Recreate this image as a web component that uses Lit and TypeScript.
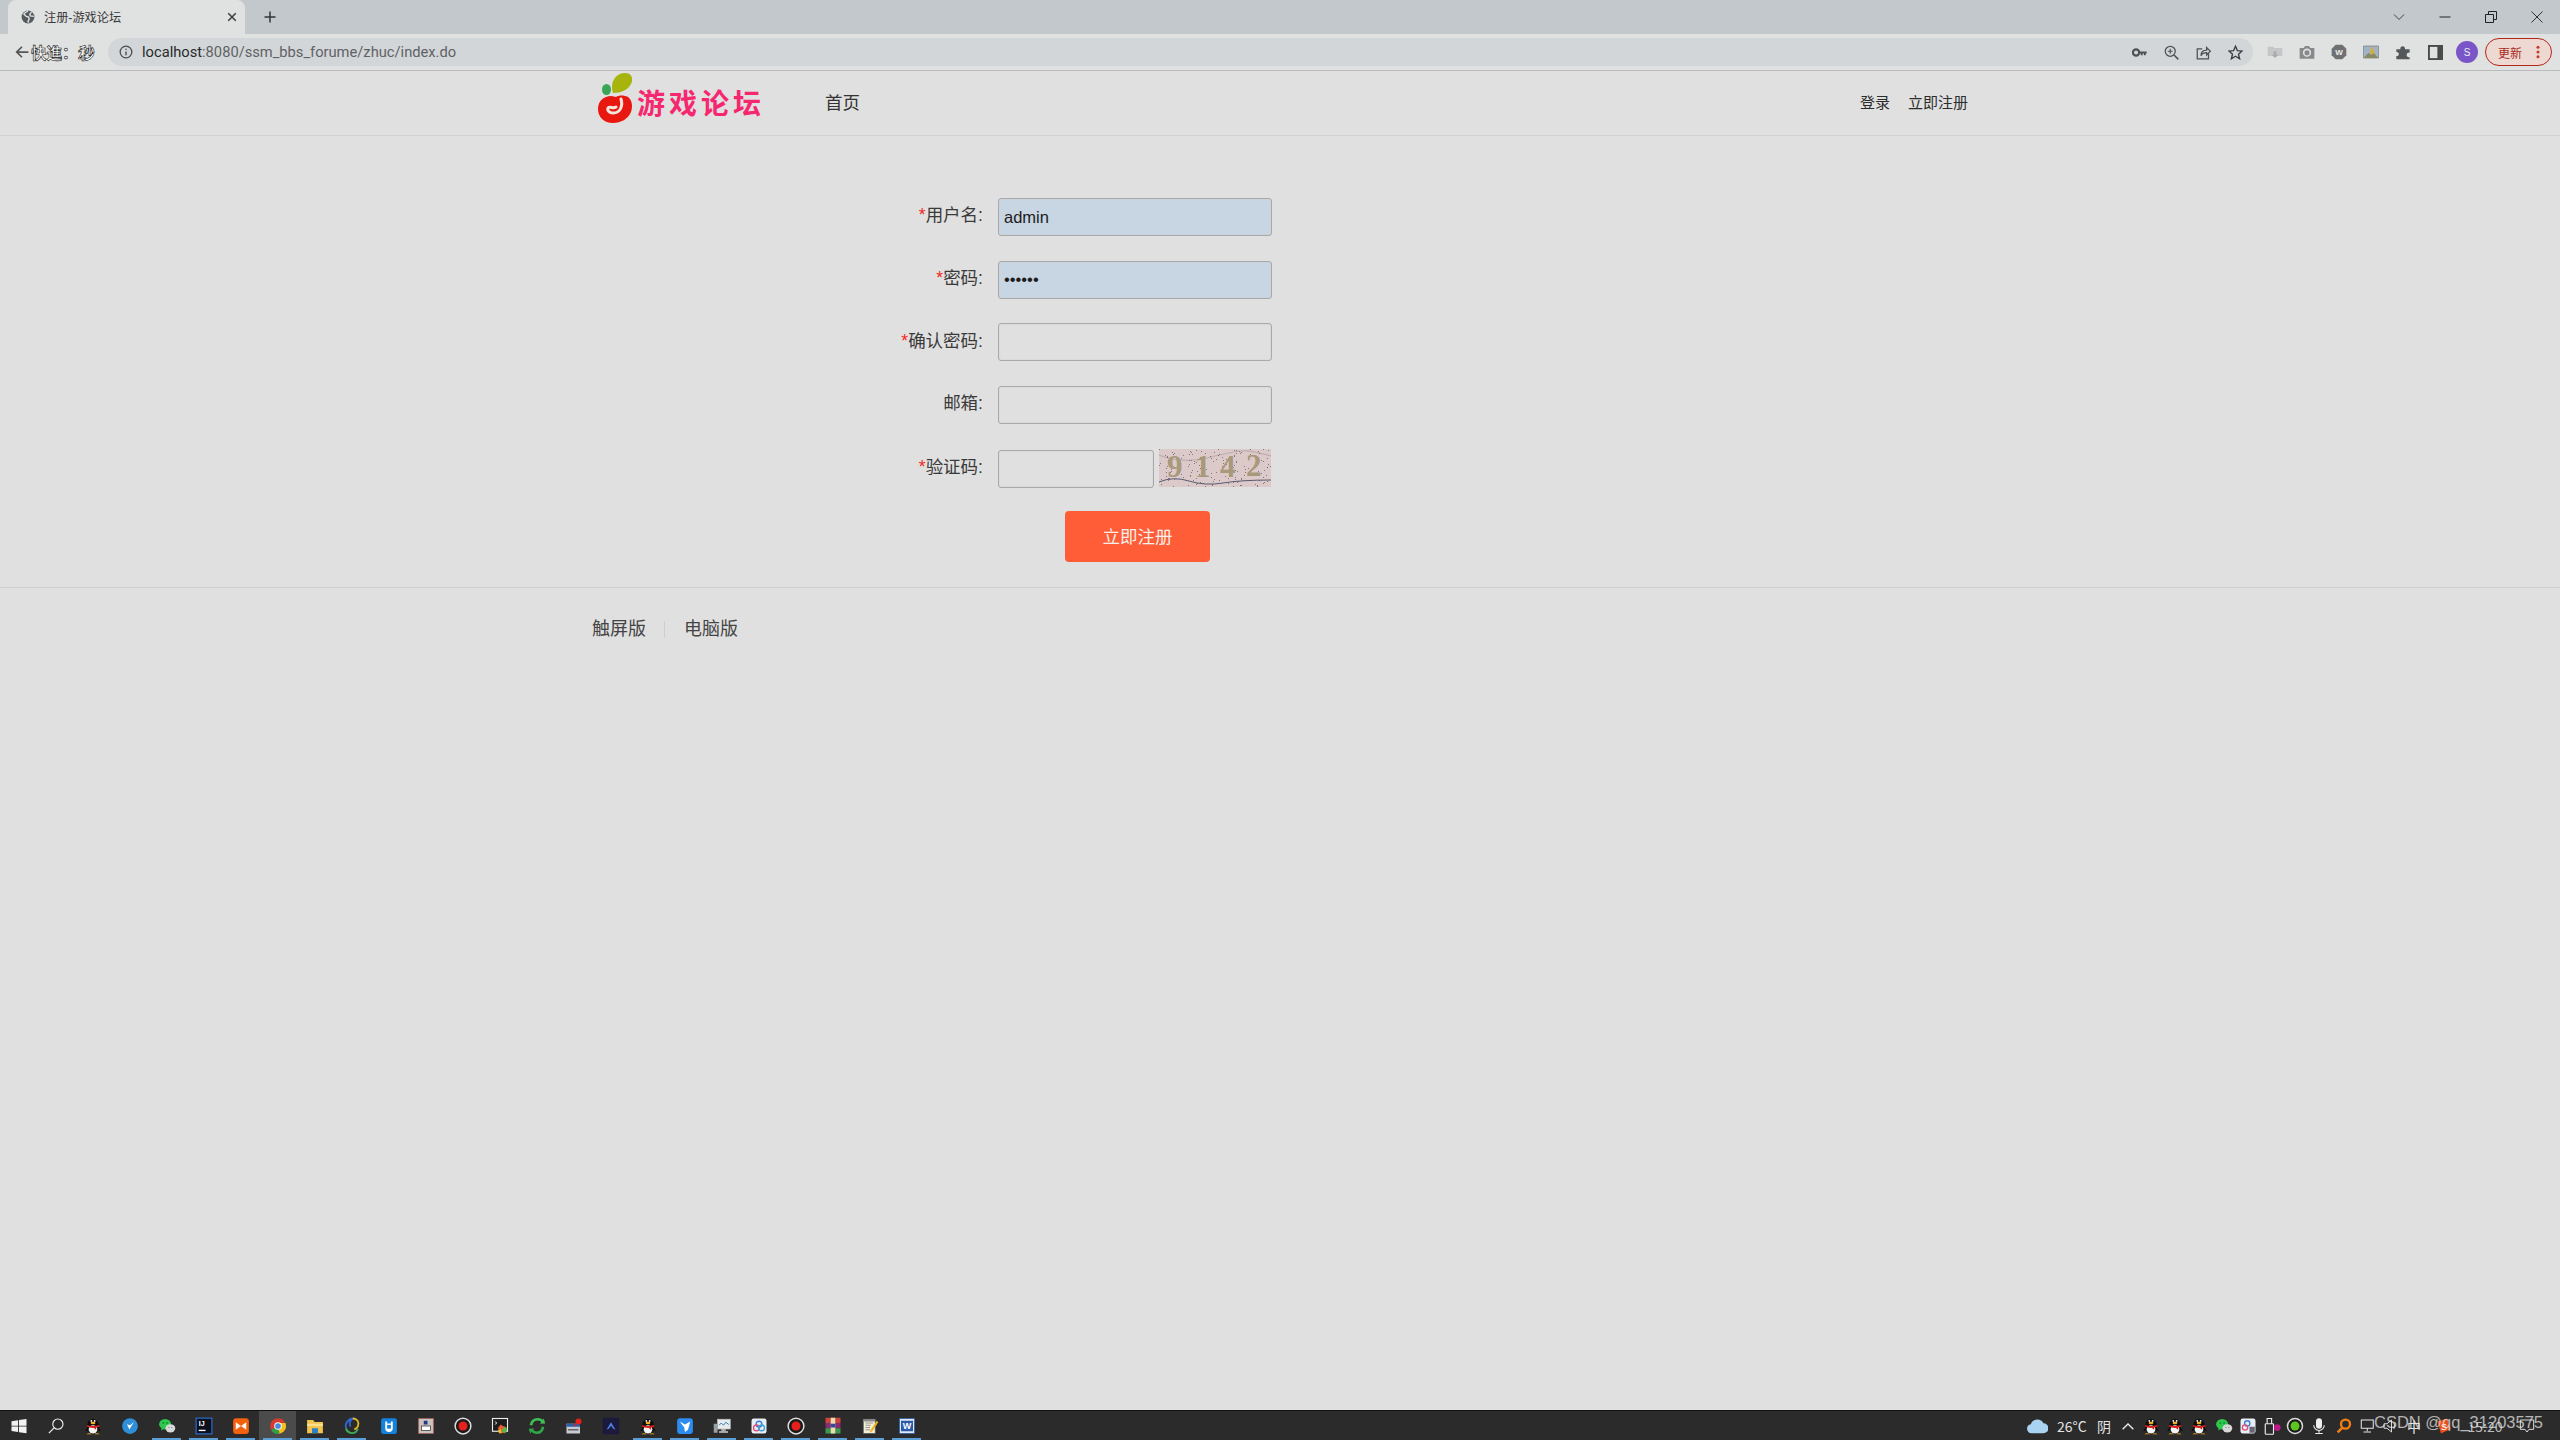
import { LitElement, html, css, svg } from "lit";
import { customElement } from "lit/decorators.js";

const icon = (size: number, body: unknown, box = 24) =>
  html`<svg width=${size} height=${size} viewBox="0 0 ${box} ${box}">${body}</svg>`;

const penguin = svg`
  <path d="M5 14l-3.500 4 3.500 1zM19 14l3.500 4-3.500 1z" fill="#0d0d0d"/>
  <ellipse cx="12" cy="12.500" rx="8" ry="10" fill="#0d0d0d"/>
  <ellipse cx="12" cy="16.500" rx="5.800" ry="5.500" fill="#f4f4f4"/>
  <ellipse cx="12" cy="8" rx="3.200" ry="1.600" fill="#f2b01e"/>
  <circle cx="9.800" cy="5.200" r="1.200" fill="#fff"/><circle cx="14.200" cy="5.200" r="1.200" fill="#fff"/>
  <path d="M3.800 10.500q8.200 3 16.400 0l.4 2.400q-2.800 1-4.700 1.200l.5 3.200-3.200-2.600q-2.500.2-9-1.800z" fill="#d8201c"/>
  <path d="M3 23q4-3 7.500 0zM13.500 23q3.500-3 7.500 0z" fill="#f2a51e"/>`;

const wechat = svg`
  <ellipse cx="9.500" cy="9.500" rx="8" ry="7" fill="#2dc84d"/>
  <path d="M5 14l-.8 4 4-2.400z" fill="#2dc84d"/>
  <ellipse cx="16.500" cy="15" rx="6.500" ry="5.500" fill="#d8d8d8"/>
  <circle cx="7" cy="8" r="1.100" fill="#0b6b22"/><circle cx="12" cy="8" r="1.100" fill="#0b6b22"/>
  <circle cx="14.500" cy="14" r=".8" fill="#777"/><circle cx="18.500" cy="14" r=".8" fill="#777"/>`;

const record = svg`
  <circle cx="12" cy="12" r="10.500" fill="#1a1a1a" stroke="#ddd" stroke-width="2"/>
  <circle cx="12" cy="12" r="6" fill="#e6211d"/>`;

const appTile = svg`
  <rect x="2" y="2" width="20" height="20" rx="3" fill="#e8eef3"/>
  <circle cx="12" cy="9.500" r="3.800" fill="none" stroke="#3b7fd6" stroke-width="1.800"/>
  <circle cx="8.500" cy="14.500" r="3.800" fill="none" stroke="#e0507a" stroke-width="1.800"/>
  <circle cx="15.500" cy="14.500" r="3.800" fill="none" stroke="#35a8d8" stroke-width="1.800"/>`;

const taskIcons: { body: unknown; running?: boolean; active?: boolean }[] = [
  { body: svg`<path d="M2 5.500l8.800-1.300v7.300H2zM12 4l10-1.500v9H12zM2 12.700h8.800V20L2 18.700zM12 12.700h10v9L12 20.200z" fill="#f2f2f2"/>` },
  { body: svg`<circle cx="14.500" cy="9.500" r="6.800" fill="none" stroke="#eee" stroke-width="1.500"/><path d="M9.500 14.500L2.500 21.500" stroke="#eee" stroke-width="1.600"/>` },
  { body: penguin },
  { body: svg`<circle cx="12" cy="12" r="10.500" fill="#2f8fd8"/><path d="M8 9.500l3.200 7 6-10-5 4.500z" fill="#fff"/>` },
  { body: wechat, running: true },
  { body: svg`<rect x="1.500" y="1.500" width="21" height="21" fill="#0c0f1c" stroke="#2f6fd6" stroke-width="1.500"/><text x="5" y="12.500" font-family="Liberation Sans" font-weight="700" font-size="9.500" fill="#fff">IJ</text><rect x="5" y="17" width="9" height="1.800" fill="#fff"/>`, running: true },
  { body: svg`<rect x="1.500" y="1.500" width="21" height="21" rx="4" fill="#f4610c"/><path d="M5 7l7 5-7 5zM19 7l-7 5 7 5z" fill="#fff" opacity=".95"/>`, running: true },
  { body: svg`<circle cx="12" cy="12" r="10.500" fill="#d93a2e"/><path d="M12 12L2.900 17.300A10.500 10.500 0 0 0 14 22.300z" fill="#2f9e48"/><path d="M12 12l2 10.300A10.500 10.500 0 0 0 21.900 8H12z" fill="#f3c21d"/><circle cx="12" cy="12" r="5" fill="#fff"/><circle cx="12" cy="12" r="3.800" fill="#4a86e0"/>`, running: true, active: true },
  { body: svg`<path d="M1.500 4h8l2 2.500h11v15h-21z" fill="#f2c34e"/><rect x="1.500" y="9" width="21" height="3" fill="#fbe08c"/><rect x="8" y="15" width="8" height="6.500" fill="#2e7fc9"/>`, running: true },
  { body: svg`<path d="M4 15C2 8 8 2 13 2c-4 3-5 7-3 11" fill="none" stroke="#2f66d6" stroke-width="2.400"/><path d="M13 2c6 0 9 5 7 10-1 3-3 4-5 4" fill="none" stroke="#e6b422" stroke-width="2.400"/><path d="M4 15c1 6 8 8 13 5l3-4" fill="none" stroke="#3fae5a" stroke-width="2.400"/>`, running: true },
  { body: svg`<rect x="1.500" y="1.500" width="21" height="21" rx="3" fill="#1583dc"/><path d="M7 6v9a5 5 0 0 0 10 0V6h-2.500v2.500h-5V6z" fill="#fff"/><rect x="9.500" y="10.500" width="5" height="5" fill="#1583dc"/>` },
  { body: svg`<rect x="2" y="2" width="20" height="20" fill="#c9c2bd" stroke="#b25a52" stroke-width="1.500" stroke-dasharray="1.500 1"/><rect x="6" y="12" width="12" height="6" fill="#fff" stroke="#333"/><path d="M9 5h5v5H9z" fill="#223a8a"/>` },
  { body: record },
  { body: svg`<rect x="2" y="2" width="20" height="17" fill="#1e1e1e" stroke="#eee" stroke-width="1.500"/><path d="M5 6l3 2-3 2" fill="none" stroke="#eee"/><path d="M9 15l4-5 3 2 5 2-3 7-5 1z" fill="#e85d3a"/><path d="M14 18l4-5 4 3-3 6z" fill="#56b947"/><path d="M9 18l4-2 1 5-3 1z" fill="#e6c12f"/>` },
  { body: svg`<path d="M4 11C5 5 9 3 13 3c4 0 6 2 7 4" fill="none" stroke="#3fbf55" stroke-width="3.600"/><path d="M16 9l7-.5-2-6.500z" fill="#3fbf55"/><path d="M20 13c-1 6-5 8-8 8-4 0-6-2-7-4" fill="none" stroke="#2fa548" stroke-width="3.600"/><path d="M8 15l-7 .5 2 6.500z" fill="#2fa548"/>` },
  { body: svg`<rect x="2" y="9" width="18" height="13" fill="#c8ccd2"/><rect x="2" y="9" width="18" height="4" fill="#2c5fa8"/><rect x="4" y="16" width="14" height="2" fill="#666"/><circle cx="18" cy="6" r="4" fill="#e8201c"/><path d="M15 9l-3 3" stroke="#e8201c" stroke-width="1.500"/>` },
  { body: svg`<rect x="1" y="1" width="22" height="22" rx="2" fill="#1c1a3c"/><path d="M6 17l6-10 6 10-3-1.500-3-4-3 4z" fill="#4f7fe6"/>` },
  { body: penguin, running: true },
  { body: svg`<rect x="1.500" y="1.500" width="21" height="21" rx="4" fill="#2d8cf0"/><path d="M5 6l7 4 7-4-3 11-4 3-1-6z" fill="#fff"/>`, running: true },
  { body: svg`<rect x="6" y="3" width="17" height="13" fill="#e8ecef" stroke="#bbb"/><path d="M8 11l3-3 3 3 3-4 4 3" fill="none" stroke="#2f7fb0" stroke-width="1.300"/><rect x="1" y="9" width="5" height="12" fill="#9aa0a4"/><rect x="11" y="16" width="6" height="3" fill="#aaa"/><rect x="8" y="19" width="12" height="2" fill="#ccc"/>`, running: true },
  { body: appTile, running: true },
  { body: record, running: true },
  { body: svg`<rect x="2" y="1" width="20" height="7" fill="#c9453c"/><rect x="2" y="8" width="20" height="7" fill="#8a2a70"/><rect x="2" y="15" width="20" height="7" fill="#3d9a4c"/><rect x="9" y="1" width="6" height="21" fill="#e9dcb0"/><rect x="9" y="9" width="6" height="5" fill="#2f4a9a"/>`, running: true },
  { body: svg`<rect x="3" y="3" width="16" height="19" fill="#f1efd8" stroke="#555"/><path d="M6 8h10M6 11h7M6 14h6M6 17h6" stroke="#777"/><path d="M3 3h16v3H3z" fill="#888"/><path d="M21 5l-8 12-2 4 4-2 8-12z" fill="#f2b01e"/>`, running: true },
  { body: svg`<rect x="2" y="2" width="20" height="20" fill="#dfe8f5" stroke="#2a5ba8"/><rect x="4" y="5" width="16" height="14" fill="#2a5ba8"/><text x="12" y="16.500" text-anchor="middle" font-family="Liberation Sans" font-weight="700" font-size="12" fill="#fff">W</text>`, running: true },
];

const trayIcons: { body: unknown; width: number; size: number }[] = [
  { body: svg`<path d="M4 17l8-8 8 8" fill="none" stroke="#ececec" stroke-width="2"/>`, width: 22, size: 16 },
  { body: penguin, width: 24, size: 18 },
  { body: penguin, width: 24, size: 18 },
  { body: penguin, width: 24, size: 18 },
  { body: wechat, width: 25, size: 18 },
  { body: svg`<rect x="2" y="2" width="20" height="20" rx="3" fill="#e9eef2"/><circle cx="11" cy="8.500" r="3.500" fill="none" stroke="#3b7fd6" stroke-width="1.800"/><circle cx="8" cy="14" r="3.500" fill="none" stroke="#e0507a" stroke-width="1.800"/><rect x="14" y="13" width="7" height="8" fill="#667"/>`, width: 24, size: 18 },
  { body: svg`<rect x="3" y="9" width="11" height="14" rx="1" fill="none" stroke="#eee" stroke-width="1.500"/><path d="M5.500 9V2h6v7" fill="none" stroke="#eee" stroke-width="1.500"/><circle cx="19" cy="14" r="4.500" fill="#c01a8a"/>`, width: 23, size: 18 },
  { body: svg`<circle cx="12" cy="12" r="10" fill="#1a1a1a" stroke="#ddd" stroke-width="2"/><circle cx="12" cy="12" r="6" fill="#5cc51e"/>`, width: 24, size: 18 },
  { body: svg`<rect x="8" y="1.500" width="8" height="14" rx="4" fill="#f0f0f0"/><path d="M5 11a7 7 0 0 0 14 0M12 18v3M7 22h10" fill="none" stroke="#eee" stroke-width="1.500"/>`, width: 24, size: 18 },
  { body: svg`<circle cx="14" cy="9.500" r="6" fill="none" stroke="#f07d14" stroke-width="3.200"/><path d="M9.500 14.500l-6 6" stroke="#f07d14" stroke-width="3.500"/>`, width: 25, size: 18 },
  { body: svg`<rect x="3" y="4" width="16" height="11" fill="none" stroke="#eee" stroke-width="1.300"/><path d="M11 15v4M6 20h10" stroke="#eee" stroke-width="1.300"/>`, width: 24, size: 18 },
  { body: svg`<path d="M4 9h4l6-5v16l-6-5H4z" fill="none" stroke="#ddd" stroke-width="1.300"/><path d="M17 8q3 4 0 8" fill="none" stroke="#ddd" stroke-width="1.300"/>`, width: 19, size: 18 },
];

const captchaDots = Array.from({ length: 150 }, (_, i) => ({
  x: (i * 37 + (i * i) % 23) % 112,
  y: (i * 53 + (i * 7) % 11) % 38,
}));

const captcha = html`<svg class="captcha" width="112" height="38" viewBox="0 0 112 38">
  <rect width="112" height="38" fill="#dccaca"/>
  <path d="M0 33q14-6 30-1t34 2 48-3" fill="none" stroke="#5a5a70" stroke-width="1"/>
  <path d="M0 6q24 9 48 3t34-7 30 5" fill="none" stroke="#bfaeae" stroke-width="1.200"/>
  ${captchaDots.map((d) => svg`<rect x=${d.x} y=${d.y} width="1" height="1" fill="#5f5660" opacity=".7"/>`)}
  <g font-family="Liberation Serif" font-weight="700" font-size="31" fill="#a8987c">
    <text x="8" y="28">9</text>
    <text x="36" y="28">1</text>
    <text x="61" y="28">4</text>
    <text x="87" y="27">2</text>
  </g>
</svg>`;

@customElement("app-root")
export class AppRoot extends LitElement {
  static styles = css`
    :host {
      display: flex;
      flex-direction: column;
      width: 2560px;
      height: 1440px;
      overflow: hidden;
      background: #e0e0e0;
      font-family: "Liberation Sans", "Noto Sans CJK SC", sans-serif;
      color: #333;
    }

    svg {
      display: block;
      flex: none;
    }

    /* browser chrome */
    .tabstrip {
      display: flex;
      align-items: center;
      height: 34px;
      padding-left: 8px;
      background: #c3c8cc;
    }
    .tab {
      display: flex;
      align-items: center;
      width: 237px;
      height: 34px;
      box-sizing: border-box;
      padding: 0 8px 0 13px;
      border-radius: 8px 8px 0 0;
      background: #e0e1e1;
      font-size: 12.200px;
      color: #3a3a3a;
    }
    .tab-title {
      flex: 1;
      margin-left: 9px;
    }
    .new-tab {
      margin-left: 19px;
    }
    .win-controls {
      display: flex;
      align-items: center;
      margin-left: auto;
    }
    .win-btn {
      display: flex;
      justify-content: center;
      width: 46px;
    }
    .toolbar {
      display: flex;
      align-items: center;
      height: 36px;
      border-bottom: 1px solid #b9bbbc;
      background: #e0e1e1;
    }
    .back {
      margin-left: 15px;
    }
    .seek {
      width: 65px;
      margin-left: 2px;
      font-size: 15.500px;
      font-weight: 700;
      white-space: nowrap;
      color: #fff;
      -webkit-text-stroke: 0.6px #111;
    }
    .seek .one {
      letter-spacing: -7px;
    }
    .omnibox {
      display: flex;
      align-items: center;
      flex: 1;
      height: 28px;
      margin-left: 12px;
      padding: 0 2px 0 11px;
      border-radius: 14px;
      background: #d3d6d8;
    }
    .url {
      flex: 1;
      margin-left: 9px;
      font-family: Roboto, sans-serif;
      font-size: 14.700px;
      color: #5f6265;
    }
    .url b {
      font-weight: 400;
      color: #27292b;
    }
    .omni-icon,
    .ext {
      display: flex;
      justify-content: center;
      width: 32px;
    }
    .ext-row {
      display: flex;
      align-items: center;
      margin-left: 6px;
    }
    .avatar {
      display: flex;
      align-items: center;
      justify-content: center;
      width: 22px;
      height: 22px;
      border-radius: 50%;
      background: #7a55c8;
      font-size: 10px;
      color: #eee;
    }
    .update {
      display: flex;
      align-items: center;
      width: 67px;
      height: 28px;
      box-sizing: border-box;
      margin: 0 8px 0 2px;
      padding: 0 6px 0 12px;
      border: 1px solid #b3261a;
      border-radius: 14px;
      background: #eed8d2;
      font-size: 12px;
      color: #a92a1c;
    }
    .dots {
      margin-left: auto;
    }

    /* site */
    .container {
      width: 1380px;
      margin: 0 auto;
    }
    .site-header {
      height: 64px;
      border-bottom: 1px solid #d2d2d2;
    }
    .site-header .container {
      display: flex;
      align-items: center;
      height: 100%;
      box-sizing: border-box;
      padding: 0 2px 0 7px;
    }
    .logo-mark {
      margin-bottom: 10px;
    }
    .logo-text {
      margin: 3px 0 0 4px;
      font-size: 28px;
      font-weight: 700;
      letter-spacing: 4px;
      line-height: 1;
      color: #f5286f;
    }
    .home {
      margin: 0 0 4px 60px;
      font-size: 17.500px;
      color: #333;
    }
    .user-links {
      display: flex;
      gap: 18px;
      margin: 0 0 3px auto;
      font-size: 15px;
      color: #2c2c2c;
    }

    .form {
      display: grid;
      grid-template-columns: 393px 274px;
      column-gap: 15px;
      row-gap: 24.700px;
      align-items: center;
      padding-top: 62px;
    }
    .label {
      padding-bottom: 2px;
      font-size: 17.500px;
      line-height: 1;
      text-align: right;
      color: #3a3a3a;
    }
    .req {
      color: #f0281e;
    }
    input {
      display: block;
      width: 100%;
      height: 38px;
      box-sizing: border-box;
      padding: 0 5px;
      border: 1.500px solid #a9a9a9;
      border-radius: 3px;
      outline: none;
      background: transparent;
      font-family: "Liberation Sans", sans-serif;
      font-size: 16.500px;
      color: #1c1c1c;
      box-shadow: inset 0 0 2px #cfcfcf;
    }
    input.filled {
      background: #c8d5e3;
    }
    .code-row {
      display: flex;
      align-items: flex-start;
      gap: 5px;
    }
    .code-row input {
      width: 156px;
      margin-top: 1px;
    }
    .submit {
      display: block;
      grid-column: 2;
      width: 145px;
      height: 51px;
      margin: -1px 0 0 67px;
      padding: 0 0 3px;
      border: none;
      border-radius: 4px;
      background: #fe5d38;
      font-family: inherit;
      font-size: 17.500px;
      color: #f8efe8;
    }
    .site-footer {
      margin-top: 25px;
      border-top: 1.500px solid #cfcfcf;
    }
    .site-footer .container {
      display: flex;
      align-items: center;
      box-sizing: border-box;
      padding: 32px 0 0 2px;
      font-size: 18px;
      line-height: 18px;
      color: #444;
    }
    .sep {
      width: 1px;
      height: 17px;
      margin: 0 19px 0 18px;
      background: #cfcfcf;
    }
    .spacer {
      flex: 1;
    }

    /* windows taskbar */
    .taskbar {
      position: relative;
      display: flex;
      height: 30px;
      box-sizing: border-box;
      border-top: 1px solid #111;
      background: #2b2b2b;
    }
    .task {
      position: relative;
      display: flex;
      align-items: center;
      justify-content: center;
      width: 37px;
    }
    .task.running::after {
      content: "";
      position: absolute;
      left: 4px;
      right: 4px;
      bottom: 0;
      height: 2px;
      background: #5b9fd8;
    }
    .task.active {
      background: #4b4b4b;
    }
    .tray {
      display: flex;
      align-items: center;
      margin-left: auto;
      padding-right: 25px;
      font-family: "Noto Sans CJK SC", sans-serif;
      font-size: 14px;
      color: #e4e4e4;
    }
    .tray-item {
      display: flex;
      justify-content: center;
    }
    .temp {
      width: 31px;
      margin-left: 9px;
      white-space: nowrap;
    }
    .weather {
      margin: 0 6px 0 9px;
    }
    .ime {
      width: 30px;
      text-align: center;
    }
    .badge-s {
      margin-left: 6px;
    }
    .clock {
      width: 64px;
      text-align: center;
      color: #bbb;
    }
    .notify {
      margin-left: 2px;
    }
    .watermark {
      position: absolute;
      top: 0;
      left: 2374px;
      font-family: "Liberation Sans", sans-serif;
      font-size: 16.500px;
      line-height: 22px;
      white-space: nowrap;
      color: rgba(235, 235, 235, 0.72);
    }
  `;

  private chrome() {
    return html`
      <div class="tabstrip">
        <div class="tab">
          ${icon(14, svg`<circle cx="12" cy="12" r="11" fill="#555a5e"/><path d="M12 1c-2 3-6 3-7 6l4 4 4 1 1 4-2 3 1 3M18 4l-3 3 1 3 6 1" fill="none" stroke="#e0e1e1" stroke-width="2.400"/>`)}
          <span class="tab-title">注册-游戏论坛</span>
          ${icon(10, svg`<path d="M3 3l18 18M21 3L3 21" stroke="#3a3a3a" stroke-width="3.500"/>`)}
        </div>
        <div class="new-tab">
          ${icon(12, svg`<path d="M12 1v22M1 12h22" stroke="#33363a" stroke-width="3"/>`)}
        </div>
        <div class="win-controls">
          <div class="win-btn">${icon(12, svg`<path d="M2 7l10 10L22 7" fill="none" stroke="#333" stroke-width="1.800"/>`)}</div>
          <div class="win-btn">${icon(12, svg`<path d="M1 12h22" stroke="#222" stroke-width="2"/>`)}</div>
          <div class="win-btn">${icon(12, svg`<path d="M1 7h16v16H1zM7 7V1h16v16h-6" fill="none" stroke="#222" stroke-width="2"/>`)}</div>
          <div class="win-btn">${icon(12, svg`<path d="M1 1l22 22M23 1L1 23" stroke="#222" stroke-width="1.800"/>`)}</div>
        </div>
      </div>
      <div class="toolbar">
        <span class="back">${icon(14, svg`<path d="M23 12H4M12 3l-9 9 9 9" fill="none" stroke="#555" stroke-width="3"/>`)}</span>
        <span class="seek">快進：<span class="one">1</span>秒</span>
        <div class="omnibox">
          ${icon(14, svg`<circle cx="12" cy="12" r="10" fill="none" stroke="#4a4c4e" stroke-width="2.200"/><path d="M12 11v6.500M12 6.500v2.200" stroke="#4a4c4e" stroke-width="2.400"/>`)}
          <span class="url"><b>localhost</b>:8080/ssm_bbs_forume/zhuc/index.do</span>
          <span class="omni-icon">${icon(15, svg`<circle cx="6.500" cy="12" r="5" fill="none" stroke="#4e5052" stroke-width="3.500"/><path d="M11 10.500h12.500v3H22v3h-3v-3h-2v3h-3v-3h-3z" fill="#4e5052"/>`)}</span>
          <span class="omni-icon">${icon(15, svg`<circle cx="10" cy="10" r="8" fill="none" stroke="#4e5052" stroke-width="2"/><path d="M16 16l7 7" stroke="#4e5052" stroke-width="2.400"/><path d="M10 6v8M6 10h8" stroke="#4e5052" stroke-width="1.800"/>`)}</span>
          <span class="omni-icon">${icon(15, svg`<path d="M20 14v8H2V6h8" fill="none" stroke="#4e5052" stroke-width="2"/><path d="M8 17c0-7 4-9 9-9V4l6 6-6 6v-4c-4 0-7 1-9 5z" fill="none" stroke="#4e5052" stroke-width="2"/>`)}</span>
          <span class="omni-icon">${icon(15, svg`<path d="M12 2l3 7 7.500.6-5.700 5 1.800 7.400L12 18l-6.600 4 1.800-7.400-5.700-5L9 9z" fill="none" stroke="#3c3f42" stroke-width="2.200"/>`)}</span>
        </div>
        <div class="ext-row">
          <span class="ext">${icon(16, svg`<path d="M1 4h8l2 2h12v12H1z" fill="#c4c6c8"/><path d="M10 11h4v5h3l-5 5-5-5h3z" fill="#a8aaac"/>`)}</span>
          <span class="ext">${icon(16, svg`<path d="M1 6h6l2-3h6l2 3h6v16H1z" fill="#87898b"/><circle cx="12" cy="13" r="5" fill="none" stroke="#e0e1e1" stroke-width="2.400"/>`)}</span>
          <span class="ext">${icon(16, svg`<path d="M7 1h10l6 6v10l-6 6H7l-6-6V7z" fill="#6f7072"/><text x="12" y="16" text-anchor="middle" font-family="Liberation Sans" font-weight="700" font-size="12" fill="#eee">W</text>`)}</span>
          <span class="ext">${icon(16, svg`<rect x="1" y="3" width="22" height="18" fill="#9fb4c6" stroke="#777"/><path d="M1 21l7-8 4 3 4-3 7 8z" fill="#8a8a62"/><path d="M12 5h3v6h3l-4 5-4-5h2z" fill="#e6ac1c"/>`)}</span>
          <span class="ext">${icon(16, svg`<path d="M2 8h6c-1-6 8-6 7 0h7v5c-6-1-6 8 0 7v3H2v-5c5 1 5-7 0-6z" fill="#55585a"/>`)}</span>
          <span class="ext">${icon(15, svg`<rect x="1.500" y="1.500" width="21" height="21" fill="#e0e1e1" stroke="#48494b" stroke-width="3"/><rect x="15" y="2" width="7" height="20" fill="#48494b"/>`)}</span>
          <span class="ext"><span class="avatar">S</span></span>
        </div>
        <div class="update">
          <span>更新</span>
          <span class="dots">${icon(14, svg`<circle cx="12" cy="4" r="2.600" fill="#c53a2a"/><circle cx="12" cy="12" r="2.600" fill="#c53a2a"/><circle cx="12" cy="20" r="2.600" fill="#c53a2a"/>`)}</span>
        </div>
      </div>
    `;
  }

  private taskbar() {
    return html`
      <div class="taskbar">
        ${taskIcons.map(
          (t) => html`<div class="task ${t.running ? "running" : ""} ${t.active ? "active" : ""}">
            ${icon(18, t.body)}
          </div>`
        )}
        <div class="tray">
          ${icon(22, svg`<path d="M6 20a5 5 0 0 1-.8-9.900A7.500 7.500 0 0 1 19 9a5.500 5.500 0 0 1 0 11z" fill="#a9d3f0"/>`)}
          <span class="temp">26°C</span>
          <span class="weather">阴</span>
          ${trayIcons.map(
            (t) => html`<span class="tray-item" style="width: ${t.width}px">${icon(t.size, t.body)}</span>`
          )}
          <span class="ime">中</span>
          <span class="badge-s">${icon(18, svg`<path d="M3 6l13-4 5 14-13 6z" fill="#e6501e"/><text x="12" y="17" text-anchor="middle" font-family="Liberation Sans" font-size="12" fill="#fff">S</text>`)}</span>
          <span class="clock">15:20</span>
          <span class="notify">${icon(16, svg`<path d="M2 3h20v14h-7l-3 4-3-4H2z" fill="none" stroke="#ddd" stroke-width="1.500"/>`)}</span>
        </div>
        <span class="watermark">CSDN @qq_31203575</span>
      </div>
    `;
  }

  render() {
    return html`
      ${this.chrome()}
      <header class="site-header">
        <div class="container">
          <svg class="logo-mark" width="36" height="52" viewBox="0 0 36 52">
            <path d="M16 21C13 12 17 2 27 1c7-1 10 5 7 11-3 6-10 9-18 9z" fill="#a6b40c"/>
            <ellipse cx="9.500" cy="17.500" rx="4.500" ry="5.500" fill="#3aa655"/>
            <path d="M1 37c0-8 6-13 13-13 2 0 4 1 5 1 3-2 8-2 12 0 4 3 5 9 3 15-3 7-10 11-18 11C7 51 1 45 1 37z" fill="#e8170f"/>
            <path d="M24 27c2 6 0 14-8 14-4 0-6-3-5-5 2-2 5 1 8-1" fill="none" stroke="#f3e4dc" stroke-width="3" stroke-linecap="round"/>
          </svg>
          <span class="logo-text">游戏论坛</span>
          <a class="home">首页</a>
          <div class="user-links"><span>登录</span><span>立即注册</span></div>
        </div>
      </header>
      <div class="container">
        <form class="form">
          <label class="label"><span class="req">*</span>用户名:</label>
          <input class="filled" value="admin" />
          <label class="label"><span class="req">*</span>密码:</label>
          <input class="filled" type="password" value="123456" />
          <label class="label"><span class="req">*</span>确认密码:</label>
          <input type="password" />
          <label class="label">邮箱:</label>
          <input />
          <label class="label"><span class="req">*</span>验证码:</label>
          <div class="code-row"><input />${captcha}</div>
          <button class="submit" type="button">立即注册</button>
        </form>
      </div>
      <footer class="site-footer">
        <div class="container">
          <span>触屏版</span><span class="sep"></span><span>电脑版</span>
        </div>
      </footer>
      <div class="spacer"></div>
      ${this.taskbar()}
    `;
  }
}

declare global {
  interface HTMLElementTagNameMap {
    "app-root": AppRoot;
  }
}
